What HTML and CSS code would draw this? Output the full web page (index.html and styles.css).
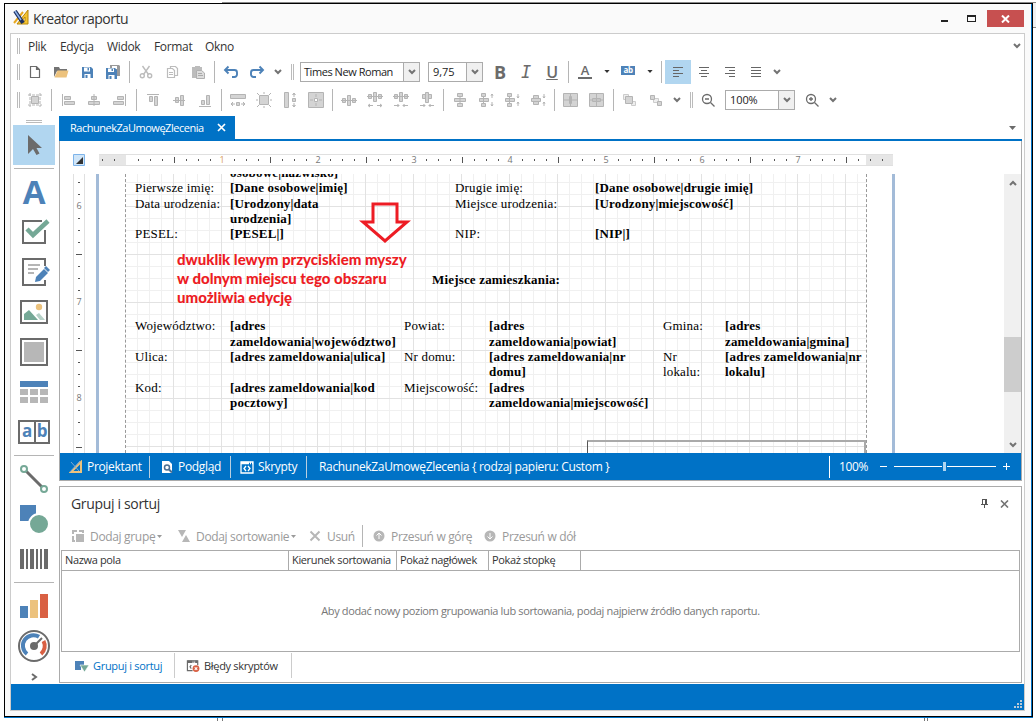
FILE: index.html
```html
<!DOCTYPE html>
<html lang="pl">
<head>
    <meta charset="UTF-8">
    <meta name="viewport" content="width=device-width, initial-scale=1.0">
    <title>Kreator raportu</title>
    <link rel="stylesheet" href="styles.css">
</head>
<body>
    <!-- shared icon shapes -->
    <svg class="defs" width="0" height="0">
        <symbol id="chev" viewBox="0 0 8 6"><path d="M1 1l3 3 3-3" fill="none" stroke="#737373" stroke-width="2"/></symbol>
        <symbol id="caret" viewBox="0 0 7 4"><path d="M0 0h7l-3.500 4z" fill="currentColor"/></symbol>
        <symbol id="save" viewBox="0 0 16 16"><path d="M3 3h9l2 2v9H3z" fill="#4d82b8"/><path d="M5 3.500h6v4H5zM5.500 10h6v4h-6z" fill="#fff"/><path d="M8.500 4h1.500v2.500H8.500zM6.500 11h2v3h-2z" fill="#4d82b8"/></symbol>
    </svg>

    <div class="window">
        <div class="titlebar">
            <svg class="logo" width="16" height="17" viewBox="0 0 16 17">
                <path d="M15 1v14H4z" fill="#f4c430" stroke="#b8860b"/><path d="M12 8v4H9z" fill="#fff" stroke="#b8860b"/>
                <path d="M1 14l9-11" stroke="#e8a820" stroke-width="2"/>
                <path d="M2 2l8 12" stroke="#1d2f60" stroke-width="4"/><path d="M2 2l6 9" stroke="#8fb3e8" stroke-width="1.500"/>
            </svg>
            <span class="caption">Kreator raportu</span>
            <span class="win-min"></span>
            <span class="win-max"></span>
            <span class="win-close"><svg width="9" height="8" viewBox="0 0 9 8"><path d="M1 .5l7 7M8 .5l-7 7" stroke="#fff" stroke-width="2"/></svg></span>
        </div>

        <div class="client">
            <div class="menubar">
                <i class="grip"></i>
                <span class="m1">Plik</span><span class="m2">Edycja</span><span class="m3">Widok</span><span class="m4">Format</span><span class="m5">Okno</span>
                <svg class="more" width="8" height="6"><use href="#chev"/></svg>
            </div>

            <div class="toolbar">
                <i class="grip"></i>
                <b class="btn"><svg viewBox="0 0 16 16"><path d="M3.500 2.500h6l3 3v8h-9zM9.500 2.500v3h3" fill="none" stroke="#6b6b6b" stroke-width="1.200"/></svg></b>
                <b class="btn"><svg viewBox="0 0 16 16"><path d="M1 3h5l1 2h7v2H4l-3 6z" fill="#737373"/><path d="M4.500 6.500H15.500L13.500 13.500H1.500z" fill="#ecc27d"/></svg></b>
                <b class="btn"><svg><use href="#save"/></svg></b>
                <b class="btn"><svg viewBox="0 0 16 16"><path d="M5 1h9l1 1v10H5z" fill="#999"/><path d="M7 2h5v3H7z" fill="#fff"/><path d="M1 4h9l2 2v9H1z" fill="#4d82b8"/><path d="M3 4.500h6v3.500H3zM3.500 11h6v4h-6z" fill="#fff"/><path d="M6.500 5H8v2H6.500zM4.500 12h2v3h-2z" fill="#4d82b8"/></svg></b>
                <i class="sep"></i>
                <b class="btn"><svg viewBox="0 0 16 16" fill="none" stroke="#bcbcbc" stroke-width="1.400"><path d="M4.500 2l6 8.500M11.500 2l-6 8.500"/><circle cx="4.300" cy="11.800" r="2"/><circle cx="11.700" cy="11.800" r="2"/></svg></b>
                <b class="btn"><svg viewBox="0 0 16 16" fill="#fff" stroke="#bcbcbc" stroke-width="1.200"><path d="M6.500 2.500h5l2 2v7h-7z"/><path d="M3.500 4.500h5l2 2v7h-7z"/><path d="M5 8.500h4M5 10.500h4"/></svg></b>
                <b class="btn"><svg viewBox="0 0 16 16"><path d="M2 3h3V2h5v1h2v11H2z" fill="#bcbcbc"/><path d="M6.500 6.500h5l3 2.500v5.500h-8z" fill="#ddd" stroke="#b0b0b0"/><path d="M8 9.500h4M8 11.500h5" stroke="#aaa"/></svg></b>
                <i class="sep"></i>
                <b class="btn"><svg viewBox="0 0 16 16"><path d="M5.500 2.500L2 6l3.500 3.500M2 6h9.500a2.500 2.500 0 0 1 2.500 2.500v2a2.500 2.500 0 0 1-2.500 2.500H9" fill="none" stroke="#4d82b8" stroke-width="1.900"/></svg></b>
                <b class="btn"><svg viewBox="0 0 16 16"><path d="M10.500 2.500L14 6l-3.500 3.500M14 6H4.500A2.500 2.500 0 0 0 2 8.500v2A2.500 2.500 0 0 0 4.500 13H7" fill="none" stroke="#4d82b8" stroke-width="1.900"/></svg></b>
                <b class="btn drop"><svg><use href="#chev"/></svg></b>
                <i class="grip second"></i>
                <span class="combo font">Times New Roman<em><svg width="8" height="6"><use href="#chev"/></svg></em></span>
                <span class="combo size">9,75<em><svg width="8" height="6"><use href="#chev"/></svg></em></span>
                <b class="btn letter">B</b>
                <b class="btn letter it">I</b>
                <b class="btn letter un">U</b>
                <i class="sep"></i>
                <b class="btn color">A</b>
                <b class="btn mini"><svg><use href="#caret"/></svg></b>
                <b class="btn"><span class="ab">ab</span></b>
                <b class="btn mini"><svg><use href="#caret"/></svg></b>
                <i class="sep"></i>
                <b class="btn on"><svg viewBox="0 0 16 16"><path d="M3 3.500h10M3 6.500h6M3 9.500h10M3 12.500h6" stroke="#666"/></svg></b>
                <b class="btn"><svg viewBox="0 0 16 16"><path d="M3 3.500h10M5 6.500h6M3 9.500h10M5 12.500h6" stroke="#666"/></svg></b>
                <b class="btn"><svg viewBox="0 0 16 16"><path d="M3 3.500h10M7 6.500h6M3 9.500h10M7 12.500h6" stroke="#666"/></svg></b>
                <b class="btn"><svg viewBox="0 0 16 16"><path d="M3 3.500h10M3 6.500h10M3 9.500h10M3 12.500h10" stroke="#666"/></svg></b>
                <b class="btn drop"><svg><use href="#chev"/></svg></b>
            </div>

            <div class="toolbar layout">
                <i class="grip"></i>
                <b class="btn"><svg viewBox="0 0 16 16"><path d="M4.500 4.500h7v7h-7z"/><path d="M3 1v14M13 1v14M1 3h14M1 13h14" fill="none" stroke-dasharray="3 1"/></svg></b>
                <i class="sep"></i>
                <b class="btn"><svg viewBox="0 0 16 16"><path d="M2.500 2v12M4.500 4.500h6v3h-6zM4.500 9.500h10v3h-10z"/></svg></b>
                <b class="btn"><svg viewBox="0 0 16 16"><path d="M8 2v12M5.500 4.500h5v3h-5zM2.500 9.500h11v3h-11z"/></svg></b>
                <b class="btn"><svg viewBox="0 0 16 16"><path d="M13.500 2v12M5.500 4.500h6v3h-6zM1.500 9.500h10v3h-10z"/></svg></b>
                <i class="sep"></i>
                <b class="btn"><svg viewBox="0 0 16 16"><path d="M2 2.500h12M4.500 4.500h3v5h-3zM9.500 4.500h3v9h-3z"/></svg></b>
                <b class="btn"><svg viewBox="0 0 16 16"><path d="M2 8.500h12M4.500 5.500h3v5h-3zM9.500 3.500h3v10h-3z"/></svg></b>
                <b class="btn"><svg viewBox="0 0 16 16"><path d="M2 14.500h12M4.500 8.500h3v4h-3zM9.500 3.500h3v9h-3z"/></svg></b>
                <i class="sep"></i>
                <b class="btn"><svg viewBox="0 0 16 16"><path d="M.5 2.500h15v4H.5zM6.500 10.500h3v3h-3zM1 12h4M11 12h4M3 10L1 12l2 2M13 10l2 2-2 2"/></svg></b>
                <b class="btn"><svg viewBox="0 0 16 16"><path d="M3.500 3.500h9v9h-9zM8 0v2M8 14v2M0 8h2M14 8h2M3 3L1 1M13 3l2-2M3 13l-2 2M13 13l2 2"/></svg></b>
                <b class="btn"><svg viewBox="0 0 16 16"><path d="M2.500.5h4v15h-4zM10.500 6.500h3v3h-3zM12 1v4M12 11v4M10.500 3L12 1l1.500 2M10.500 13l1.500 2 1.500-2"/></svg></b>
                <b class="btn"><svg viewBox="0 0 16 16"><path d="M.5.5h15v15H.5z"/><path d="M6.500 6.500h3v3h-3zM8 2v3M8 11v3M2 8h3M11 8h3" fill="#fff"/></svg></b>
                <i class="sep"></i>
                <b class="btn"><svg viewBox="0 0 16 16"><path d="M0 8.500h16M1.500 6.500h3v4h-3zM6.500 3.500h3v10h-3zM11.500 6.500h3v4h-3z"/></svg></b>
                <b class="btn"><svg viewBox="0 0 16 16"><path d="M0 4.500h16M1.500 2.500h3v4h-3zM6.500.5h3v9h-3zM11.500 2.500h3v4h-3zM1 13.500h5M10 13.500h5M3 12l-2 1.500L3 15M13 12l2 1.500-2 1.500"/></svg></b>
                <b class="btn"><svg viewBox="0 0 16 16"><path d="M0 4.500h16M1.500 2.500h3v4h-3zM6.500.5h3v9h-3zM11.500 2.500h3v4h-3zM1 13.500h5M10 13.500h5M4.500 12L6 13.500 4.500 15M11.500 12L10 13.500l1.500 1.500"/></svg></b>
                <b class="btn"><svg viewBox="0 0 16 16"><path d="M3.500 2.500h3v4h-3zM6.500.5h3v10h-3zM9.500 2.500h3v4h-3zM1 13.500h5M10 13.500h5M4.500 12L6 13.500 4.500 15M11.500 12L10 13.500l1.500 1.500"/></svg></b>
                <i class="sep"></i>
                <b class="btn"><svg viewBox="0 0 16 16"><path d="M5.500 1.500h5v3h-5zM2.500 6.500h11v3h-11zM5.500 11.500h5v3h-5zM8 4v8"/></svg></b>
                <b class="btn"><svg viewBox="0 0 16 16"><path d="M3.500 1.500h4v3h-4zM1.500 6.500h9v3h-9zM3.500 11.500h4v3h-4zM5.500 4v8M14 2v4M14 10v4M13 3.500L14 2l1 1.500M13 12.500l1 1.500 1-1.500"/></svg></b>
                <b class="btn"><svg viewBox="0 0 16 16"><path d="M3.500 1.500h4v3h-4zM1.500 6.500h9v3h-9zM3.500 11.500h4v3h-4zM5.500 4v8M14 2v4M14 10v4M13 4.500L14 6l1-1.500M13 11.500l1-1.500 1 1.500"/></svg></b>
                <b class="btn"><svg viewBox="0 0 16 16"><path d="M3.500 3.500h5v3h-5zM1.500 6.500h9v3h-9zM3.500 9.500h5v3h-5zM14 2v4M14 10v4M13 4.500L14 6l1-1.500M13 11.500l1-1.500 1 1.500"/></svg></b>
                <i class="sep"></i>
                <b class="btn"><svg viewBox="0 0 16 16"><path d="M.5 1.500h14v13H.5z"/><path d="M1 8h13M7.500 2v12M6.500 4.500h2v7h-2z"/></svg></b>
                <b class="btn"><svg viewBox="0 0 16 16"><path d="M.5 1.500h14v13H.5z"/><path d="M1 8h13M7.500 2v12M3.500 6.500h8v3h-8z"/></svg></b>
                <i class="sep"></i>
                <b class="btn"><svg viewBox="0 0 16 16"><path d="M1.500 2.500h5v5h-5zM9.500 9.500h4v4h-4z" fill="#eee" stroke="#ccc"/><path d="M3.500 4.500h7v7h-7z"/></svg></b>
                <b class="btn"><svg viewBox="0 0 16 16"><path d="M5.500 6.500h5v4h-5z" fill="#eee" stroke="#ccc"/><path d="M2.500 3.500h4v4h-4zM9.500 9.500h4v4h-4z"/></svg></b>
                <b class="btn drop"><svg><use href="#chev"/></svg></b>
                <i class="grip third"></i>
                <b class="btn zoom"><svg viewBox="0 0 16 16"><circle cx="7" cy="7" r="4.500"/><path d="M10.500 10.500l4 4M5 7h4"/></svg></b>
                <span class="combo scale">100%<em><svg width="8" height="6"><use href="#chev"/></svg></em></span>
                <b class="btn zoom in"><svg viewBox="0 0 16 16"><circle cx="7" cy="7" r="4.500"/><path d="M10.500 10.500l4 4M5 7h4M7 5v4"/></svg></b>
                <b class="btn drop"><svg><use href="#chev"/></svg></b>
            </div>

            <div class="work">
                <div class="toolbox">
                    <i class="hgrip"></i>
                    <b class="tool on"><svg viewBox="0 0 32 32"><path d="M10 6v19l5-5 3.500 6 3-1.500L18.500 19H24z" fill="#6b6b6b"/></svg></b>
                    <i class="hsep"></i>
                    <b class="tool bigA">A</b>
                    <b class="tool"><svg viewBox="0 0 32 32"><path d="M24 5H5v22h22V14" fill="none" stroke="#6b6b6b" stroke-width="2"/><path d="M9 13l6 6L30 5" fill="none" stroke="#75a896" stroke-width="4.500"/></svg></b>
                    <b class="tool"><svg viewBox="0 0 32 32"><path d="M27 10V3H5v26h22v-5" fill="none" stroke="#6b6b6b" stroke-width="2"/><path d="M10 9h12M10 13h10M10 17h6" stroke="#b5b5b5" stroke-width="2"/><path d="M17 26l1-5 8-8 4 4-8 8z" fill="#4d82b8"/><path d="M26 12l4 4 2-2-4-4z" fill="#4d82b8"/></svg></b>
                    <b class="tool"><svg viewBox="0 0 32 32"><path d="M3 5h26v22H3z" fill="none" stroke="#6b6b6b" stroke-width="2"/><circle cx="21" cy="11" r="3.200" fill="#ecc27d"/><path d="M6 24v-6l5-4 9 10z" fill="#75a896"/><path d="M18 19l3-2 6 7h-5z" fill="#b7d1c8"/></svg></b>
                    <b class="tool"><svg viewBox="0 0 32 32"><path d="M3 3h26v26H3z" fill="none" stroke="#6b6b6b" stroke-width="2"/><path d="M6 6h20v20H6z" fill="#b7b7b7"/></svg></b>
                    <b class="tool"><svg viewBox="0 0 32 32"><path d="M2 5h28v6H2z" fill="#4d82b8"/><path d="M2 13h8v6H2zM12 13h8v6h-8zM22 13h8v6h-8zM2 21h8v6H2zM12 21h8v6h-8zM22 21h8v6h-8z" fill="#b7b7b7"/></svg></b>
                    <b class="tool"><span class="comb"><u>a</u><u>b</u></span></b>
                    <i class="hsep"></i>
                    <b class="tool"><svg viewBox="0 0 32 32" fill="none"><path d="M8 8l16 16" stroke="#6b6b6b" stroke-width="3"/><circle cx="6" cy="6" r="3" stroke="#75a896" stroke-width="2"/><circle cx="26" cy="26" r="3" stroke="#75a896" stroke-width="2"/></svg></b>
                    <b class="tool"><svg viewBox="0 0 32 32"><path d="M2 2h16v16H2z" fill="#4d82b8"/><circle cx="21" cy="21" r="10" fill="#75a896" stroke="#fff" stroke-width="2"/></svg></b>
                    <b class="tool"><svg viewBox="0 0 32 32"><path d="M2 6h4v20H2zM8 6h2v20H8zM12 6h4v20h-4zM18 6h2v20h-2zM22 6h2v20h-2zM26 6h4v20h-4z" fill="#6b6b6b"/></svg></b>
                    <i class="hsep"></i>
                    <b class="tool"><svg viewBox="0 0 32 32"><path d="M2 16h8v12H2z" fill="#4d82b8"/><path d="M12 10h8v18h-8z" fill="#ecc27d"/><path d="M22 4h8v24h-8z" fill="#d96043"/></svg></b>
                    <b class="tool"><svg viewBox="0 0 32 32" fill="none"><circle cx="16" cy="16" r="15" stroke="#6b6b6b" stroke-width="2"/><path d="M9 24A10.500 10.500 0 0 1 21 6.800" stroke="#4d82b8" stroke-width="4"/><path d="M25.500 11a10.500 10.500 0 0 1-2.500 13" stroke="#d96043" stroke-width="4"/><path d="M16 16l8-8" stroke="#6b6b6b" stroke-width="2"/><circle cx="16" cy="16" r="4" fill="#6b6b6b"/></svg></b>
                    <svg class="next" width="7" height="8" viewBox="0 0 7 8"><path d="M1 1l4 3-4 3" fill="none" stroke="#6b6b6b" stroke-width="2"/></svg>
                </div>

                <div class="right">
                    <div class="tabs">
                        <span class="tab">RachunekZaUmowęZlecenia <svg width="9" height="9" viewBox="0 0 9 9"><path d="M1 1l7 7M8 1L1 8" stroke="#fff" stroke-width="1.700"/></svg></span>
                        <svg class="tabmenu" width="7" height="4"><use href="#caret"/></svg>
                    </div>

                    <div class="designer">
                        <div class="ruler-row">
                            <svg class="corner" width="12" height="12" viewBox="0 0 12 12"><path d="M.5.5h11v11H.5z" fill="#cfe5f8" stroke="#7eb4ea"/><path d="M10 3v7H3z" fill="#333"/></svg>
                            <div class="hruler">
                                <svg width="794" height="12">
                                    <defs><pattern id="ht" x="27" width="48" height="12" patternUnits="userSpaceOnUse"><path d="M12.500 4v2M24.500 4v2M36.500 4v2" stroke="#555"/></pattern></defs>
                                    <path d="M27 0h740v12H27z" fill="#fff"/>
                                    <path d="M0 0h794v12H0z" fill="url(#ht)"/>
                                    <path d="M75.500 2v6M171.500 2v6M267.500 2v6M363.500 2v6M459.500 2v6M555.500 2v6M651.500 2v6M747.500 2v6" stroke="#555"/>
                                </svg>
                                <div class="nums"><s class="hot">1</s><s>2</s><s>3</s><s>4</s><s>5</s><s>6</s><s>7</s></div>
                            </div>
                        </div>
                        <div class="surface">
                            <div class="vruler">
                                <svg width="12" height="279">
                                    <defs><pattern id="vt" y="32" width="12" height="48" patternUnits="userSpaceOnUse"><path d="M4 12.500h2M4 24.500h2M4 36.500h2" stroke="#555"/></pattern></defs>
                                    <path d="M0 0h12v279H0z" fill="url(#vt)"/>
                                    <path d="M2 80.500h6M2 176.500h6M2 273.500h6" stroke="#555"/>
                                </svg>
                                <div class="nums"><s>6</s><s>7</s><s>8</s></div>
                            </div>
                            <div class="paper">
                                <div class="band">
                                    <div class="person">
                                        <span></span><strong>osobowe|nazwisko]</strong><span></span><span></span>
                                        <span>Pierwsze imię:</span><strong>[Dane osobowe|imię]</strong><span>Drugie imię:</span><strong>[Dane osobowe|drugie imię]</strong>
                                        <span>Data urodzenia:</span><strong>[Urodzony|data<br>urodzenia]</strong><span>Miejsce urodzenia:</span><strong>[Urodzony|miejscowość]</strong>
                                        <span>PESEL:</span><strong>[PESEL|]</strong><span>NIP:</span><strong>[NIP|]</strong>
                                    </div>
                                    <h2>Miejsce zamieszkania:</h2>
                                    <div class="address">
                                        <span>Województwo:</span><strong>[adres<br>zameldowania|województwo]</strong><span>Powiat:</span><strong>[adres<br>zameldowania|powiat]</strong><span>Gmina:</span><strong>[adres<br>zameldowania|gmina]</strong>
                                        <span>Ulica:</span><strong>[adres zameldowania|ulica]</strong><span>Nr domu:</span><strong>[adres zameldowania|nr<br>domu]</strong><span>Nr<br>lokalu:</span><strong>[adres zameldowania|nr<br>lokalu]</strong>
                                        <span>Kod:</span><strong>[adres zameldowania|kod<br>pocztowy]</strong><span>Miejscowość:</span><strong>[adres<br>zameldowania|miejscowość]</strong>
                                    </div>
                                    <div class="frame"></div>
                                    <p class="note">dwuklik lewym przyciskiem myszy<br>w dolnym miejscu tego obszaru<br>umożliwia edycję</p>
                                    <svg class="arrow" width="52" height="42" viewBox="0 0 52 42"><path d="M14 2h24v18h10L26 39 4 20h10z" fill="none" stroke="#ed1c24" stroke-width="3"/></svg>
                                </div>
                            </div>
                            <div class="scroll">
                                <svg width="8" height="6"><use href="#chev"/></svg>
                                <i></i>
                                <svg width="8" height="6"><use href="#chev"/></svg>
                            </div>
                        </div>
                        <div class="viewbar">
                            <span class="v1"><svg viewBox="0 0 14 14"><path d="M12 2v10H2z" fill="none" stroke="#ecc27d" stroke-width="2"/><path d="M2 2l8 9M1 12L11 1" stroke="#7fa9d2"/></svg>Projektant</span>
                            <span class="v2"><svg viewBox="0 0 14 14"><path d="M2 1h7l3 3v9H2z" fill="#fff"/><circle cx="7" cy="7.500" r="2.500" fill="none" stroke="#4d6f91" stroke-width="1.500"/><path d="M9 9.500l3 3" stroke="#4d6f91" stroke-width="2"/></svg>Podgląd</span>
                            <span class="v3"><svg viewBox="0 0 14 14"><path d="M1 2h12v11H1z" fill="none" stroke="#fff" stroke-width="1.300"/><path d="M1 3h12" stroke="#fff" stroke-width="2.500" stroke-dasharray="8 1 1 1"/><path d="M6 6L4 8.500 6 11M8 6l2 2.500L8 11" fill="none" stroke="#fff" stroke-width="1.300"/></svg>Skrypty</span>
                            <span class="v4">RachunekZaUmowęZlecenia { rodzaj papieru: Custom }</span>
                            <span class="v5">100%</span>
                            <svg class="slider" width="130" height="11" viewBox="0 0 130 11"><path d="M0 5.500h7M14 5.500h102M123 5.500h7M126.500 2v7" stroke="#fff"/><path d="M62 1h5v9h-5z" fill="#0072c6"/><path d="M63 1h3v9h-3z" fill="#b1d6f0"/></svg>
                        </div>
                    </div>

                    <div class="panel">
                        <div class="panel-head">
                            <span>Grupuj i sortuj</span>
                            <svg width="7" height="9" viewBox="0 0 7 9"><path d="M1.500 0v5.500M0 5.500h7M3.500 6v3M1 .5h4.500" stroke="#555"/><path d="M4 0h2v5H4z" fill="#555"/></svg>
                            <svg width="9" height="8" viewBox="0 0 9 8"><path d="M1 .5l7 7M8 .5l-7 7" stroke="#737373" stroke-width="1.600"/></svg>
                        </div>
                        <div class="actions">
                            <span class="a1"><svg viewBox="0 0 12 12"><path d="M4 4h8v8H4z" fill="#b7b7b7"/><path d="M1 4V1h4M7 1h4v2M1 6v5h2" fill="none" stroke="#b7b7b7" stroke-width="2"/></svg>Dodaj grupę<svg class="car" viewBox="0 0 7 4"><use href="#caret"/></svg></span>
                            <span class="a2"><svg viewBox="0 0 12 12"><path d="M0 0h8L4 7zM4 12l4-7 4 7z" fill="#b7b7b7"/></svg>Dodaj sortowanie<svg class="car" viewBox="0 0 7 4"><use href="#caret"/></svg></span>
                            <span class="a3"><svg viewBox="0 0 12 12"><path d="M1.500 1.500l9 9M10.500 1.500l-9 9" stroke="#b7b7b7" stroke-width="2"/></svg>Usuń</span>
                            <span class="a4"><svg viewBox="0 0 12 12"><circle cx="6" cy="6" r="5.500" fill="#b7b7b7"/><path d="M6 9V3M3.500 5.500L6 3l2.500 2.500" fill="none" stroke="#fff"/></svg>Przesuń w górę</span>
                            <span class="a5"><svg viewBox="0 0 12 12"><circle cx="6" cy="6" r="5.500" fill="#b7b7b7"/><path d="M6 3v6M3.500 6.500L6 9l2.500-2.500" fill="none" stroke="#fff"/></svg>Przesuń w dół</span>
                        </div>
                        <div class="grid">
                            <div class="grid-head"><span>Nazwa pola</span><span>Kierunek sortowania</span><span>Pokaż nagłówek</span><span>Pokaż stopkę</span></div>
                            <div class="empty">Aby dodać nowy poziom grupowania lub sortowania, podaj najpierw źródło danych raportu.</div>
                        </div>
                        <div class="panel-tabs">
                            <span class="t1"><svg viewBox="0 0 14 12"><path d="M0 1h9v4H6v5H0z" fill="#4d82b8"/><path d="M5 5h9l-4.500 7z" fill="#75a896" stroke="#fff" stroke-width=".6"/></svg>Grupuj i sortuj</span>
                            <span class="t2"><svg viewBox="0 0 15 14"><path d="M7 12.500H1V1h12v5" fill="none" stroke="#6b6b6b" stroke-width="1.400"/><path d="M1 2h12" stroke="#6b6b6b" stroke-width="3" stroke-dasharray="6 1 1 1"/><path d="M5.500 6L4 8l1.500 2" fill="none" stroke="#6b6b6b" stroke-width="1.300"/><circle cx="11" cy="10" r="4" fill="#d96043"/><path d="M9.500 8.500l3 3M12.500 8.500l-3 3" stroke="#fff" stroke-width="1.200"/></svg>Błędy skryptów</span>
                        </div>
                    </div>
                </div>
            </div>

            <div class="statusbar"><svg width="8" height="8" viewBox="0 0 8 8"><path d="M6 0h2v2H6zM3 3h2v2H3zM6 3h2v2H6zM0 6h2v2H0zM3 6h2v2H3zM6 6h2v2H6z" fill="#b9c9d6"/></svg></div>
        </div>
    </div>
</body>
</html>
```
FILE: styles.css
```css
* {
    box-sizing: border-box;
}
body {
    margin: 0;
    width: 1036px;
    height: 721px;
    overflow: hidden;
    padding: 3px 0 0 4px;
    /* edges of the sheet that shows behind the window */
    background:
        linear-gradient(#888, #888) 222px 2px / 814px 1px no-repeat,
        linear-gradient(#888, #888) 1033px 27px / 3px 1px no-repeat,
        linear-gradient(#f0f0f0, #f0f0f0) 1033px 3px / 3px 24px no-repeat,
        linear-gradient(90deg, #777 1px, transparent 1px 5px, #777 5px 6px, transparent 6px) 217px 718px / 7px 3px no-repeat,
        linear-gradient(90deg, #777 1px, transparent 1px 3px, #777 3px 4px, transparent 4px) 924px 718px / 5px 3px no-repeat,
        #fff;
    font-family: "Open Sans", "Noto Sans", sans-serif;
    font-size: 12px;
    letter-spacing: -0.33px;
    color: #333;
    white-space: nowrap;
}
svg {
    display: block;
    flex: none;
}
.defs {
    position: absolute;
}
b, i, s, u, em {
    font-weight: normal;
    font-style: normal;
    text-decoration: none;
}

/* window frame */
.window {
    width: 1029px;
    height: 714px;
    border: 1px solid #000;
    background: #fafafa;
    box-shadow: inset -1px 0 #0072c6, 0 1px #0072c6;
    padding: 0 7px 0 5px;
}
.titlebar {
    height: 29px;
    display: flex;
    align-items: center;
    padding-left: 3px;
}
.logo {
    margin-top: -2px;
}
.caption {
    font-size: 14px;
    letter-spacing: -0.5px;
    margin-left: 4px;
    flex: 1;
}
.win-min {
    width: 7px;
    height: 2px;
    background: #222;
    margin: 4px 19px 0 -1px;
}
.win-max {
    width: 9px;
    height: 7px;
    border: 1px solid #222;
    border-top-width: 2px;
    margin-right: 11px;
}
.win-close {
    width: 37px;
    height: 17px;
    background: #c75050;
    display: flex;
    align-items: center;
    justify-content: center;
    margin-right: 1px;
}
.client {
    width: 1015px;
    height: 678px;
    border: 1px solid #ccc;
    background: #fff;
}

/* menu and toolbars */
.menubar {
    height: 24px;
    display: flex;
    align-items: center;
    padding: 0 3px 0 6px;
}
.grip {
    width: 3px;
    height: 16px;
    border: solid #bbb;
    border-width: 0 1px;
    flex: none;
}
.m1 {
    margin-left: 8px;
    width: 32px;
}
.m2, .m3 {
    width: 47px;
}
.m4 {
    width: 51px;
}
.m5 {
    flex: 1;
}
.toolbar {
    height: 27px;
    display: flex;
    align-items: center;
    padding-left: 6px;
}
.grip + .btn {
    margin-left: 2px;
}
.btn {
    width: 26px;
    height: 24px;
    display: flex;
    align-items: center;
    justify-content: center;
    flex: none;
}
.btn svg {
    width: 16px;
    height: 16px;
}
.drop {
    width: 16px;
}
.btn.drop svg {
    width: 8px;
    height: 6px;
}
.sep {
    width: 1px;
    height: 22px;
    margin: 0 3px;
    background: #b5b5b5;
    flex: none;
}
.second {
    margin: 0 6px 0 5px;
}
.combo {
    height: 20px;
    border: 1px solid #ababab;
    display: flex;
    justify-content: space-between;
    align-items: center;
    padding-left: 4px;
    font-size: 11px;
    letter-spacing: -0.1px;
    color: #222;
    flex: none;
}
.combo em {
    width: 16px;
    height: 18px;
    border-left: 1px solid #ababab;
    background: #f0f0f0;
    display: flex;
    align-items: center;
    justify-content: center;
}
.font {
    width: 120px;
    margin-right: 8px;
    padding-left: 3px;
    letter-spacing: -0.45px;
}
.size {
    width: 55px;
    margin-right: 4px;
}
.letter {
    font-size: 18px;
    font-weight: bold;
    color: #6b6b6b;
}
.it {
    font-style: italic;
    font-weight: normal;
    font-family: "DejaVu Sans Mono", monospace;
    font-size: 17px;
}
.un {
    font-weight: 600;
    font-size: 16px;
    text-decoration: underline;
}
.color {
    font-size: 13px;
    font-weight: 600;
    color: #6b6b6b;
    background: linear-gradient(#6b6b6b, #6b6b6b) 6px 17px / 14px 2px no-repeat;
    padding-bottom: 4px;
}
.mini {
    width: 17px;
    color: #333;
}
.btn.mini svg {
    width: 6px;
    height: 3px;
}
.ab {
    width: 14px;
    height: 9px;
    line-height: 8px;
    background: #4d82b8;
    color: #fff;
    font-size: 8px;
    font-weight: bold;
    text-align: center;
    margin-top: -3px;
}
.on {
    background: #b1d6f0;
}
.layout {
    height: 29px;
}
.layout .btn svg {
    fill: #d4d4d4;
    stroke: #b4b4b4;
}
.third {
    margin: 0 2px 0 5px;
}
.toolbar .zoom {
    margin: 0 4px 0 0;
}
.toolbar .in {
    margin: 0 0 0 4px;
}
.layout .zoom svg {
    fill: none;
    stroke: #6b6b6b;
    stroke-width: 1.3;
}
.scale {
    width: 70px;
}

/* toolbox on the left */
.work {
    height: 569px;
    margin-top: 1px;
    display: flex;
}
.toolbox {
    width: 48px;
    padding: 5px 0 0 2px;
}
.hgrip {
    display: block;
    width: 16px;
    height: 3px;
    margin: 0 0 2px 13px;
    border: solid #bbb;
    border-width: 1px 0;
}
.tool {
    width: 42px;
    height: 40px;
    display: flex;
    align-items: center;
    justify-content: center;
}
.tool svg {
    width: 32px;
    height: 32px;
}
.hsep {
    display: block;
    width: 40px;
    height: 1px;
    margin: 3px 1px;
    background: #b5b5b5;
}
.bigA {
    font-size: 33px;
    font-weight: bold;
    color: #4d82b8;
    padding-bottom: 2px;
}
.comb {
    display: flex;
    width: 32px;
    height: 24px;
    border: 2px solid #6b6b6b;
}
.comb u {
    width: 14px;
    line-height: 18px;
    text-align: center;
    font-size: 17px;
    font-weight: bold;
    color: #4d82b8;
}
.comb u + u {
    border-left: 2px solid #6b6b6b;
}
.next {
    margin: 7px 0 0 18px;
}

/* document tab */
.right {
    width: 963px;
}
.tabs {
    height: 25px;
    margin-top: 1px;
    border-bottom: 2px solid #0072c6;
    display: flex;
    justify-content: space-between;
    align-items: center;
    padding-right: 6px;
}
.tab {
    width: 176px;
    height: 23px;
    background: #0072c6;
    color: #fff;
    font-size: 11px;
    letter-spacing: -0.48px;
    display: flex;
    align-items: center;
    justify-content: space-between;
    padding: 0 9px 0 11px;
}
.tabmenu {
    color: #6b6b6b;
}

/* designer surface */
.designer {
    height: 340px;
    border: solid #ababab;
    border-width: 0 1px 1px;
}
.ruler-row {
    height: 33px;
    padding: 13px 0 0 13px;
    display: flex;
}
.corner {
    margin-right: 14px;
}
.hruler {
    width: 794px;
    height: 12px;
    background: #e6e6e6;
    border: solid #e0e0e0;
    border-width: 1px 0;
}
.hruler svg {
    height: 10px;
}
.nums s {
    text-align: center;
    font-size: 9px;
    color: #777;
}
.nums .hot {
    color: #d99a5c;
}
.hruler .nums {
    display: flex;
    margin: -10px 0 0 75px;
    line-height: 10px;
}
.hruler s {
    width: 96px;
}
.surface {
    height: 279px;
    display: flex;
    justify-content: space-between;
    padding-left: 13px;
}
.vruler {
    width: 12px;
    border: solid #e0e0e0;
    border-width: 0 1px;
    overflow: hidden;
}
.vruler svg {
    width: 10px;
}
.vruler .nums {
    margin-top: -295px;
}
.vruler s {
    display: block;
    height: 96px;
    line-height: 96px;
}
.paper {
    width: 799px;
    margin-left: 11px;
    margin-right: auto;
    border: solid #a3bbd8;
    border-width: 0 3px;
    padding-left: 26px;
}
.band {
    position: relative;
    width: 742px;
    height: 279px;
    overflow: hidden;
    border: dashed #999;
    border-width: 0 1px;
    background:
        repeating-linear-gradient(90deg, transparent 0 47px, #e2e2e2 47px 48px),
        repeating-linear-gradient(transparent 0 47px, #e2e2e2 47px 48px) 0 33px / 100% 480px,
        repeating-linear-gradient(90deg, transparent 0 11px, #f0f0f0 11px 12px),
        repeating-linear-gradient(transparent 0 11px, #f0f0f0 11px 12px) 0 33px / 100% 480px;
    font-family: "Liberation Serif", serif;
    font-size: 13px;
    line-height: 15.3px;
    letter-spacing: 0.17px;
    color: #000;
}
.person {
    display: grid;
    grid-template-columns: 95px 225px 140px auto;
    margin: -9px 0 0 9px;
}
.band h2 {
    margin: 31px 0 0 306px;
    font-size: 13px;
    line-height: 15px;
}
.address {
    display: grid;
    grid-template-columns: 95px 174px 85px 174px 62px auto;
    margin: 31px 0 0 9px;
}
.frame {
    width: 279px;
    height: 30px;
    margin: 30px 0 0 461px;
    border: solid #aaa;
    border-width: 2px 2px 0 1px;
    border-left-color: #555;
}
.note {
    position: absolute;
    left: 51px;
    top: 76px;
    margin: 0;
    font: 900 15px/19px Lato, sans-serif;
    letter-spacing: 0;
    color: #ed1c24;
}
.arrow {
    position: absolute;
    left: 233px;
    top: 28px;
}
.scroll {
    width: 17px;
    background: #f0f0f0;
    display: flex;
    flex-direction: column;
    align-items: center;
    padding: 6px 0 5px;
}
.scroll svg:first-child {
    transform: rotate(180deg);
}
.scroll i {
    width: 17px;
    height: 55px;
    margin: 151px 0 auto;
    background: #cdcdcd;
}
.viewbar {
    height: 27px;
    background: #0072c6;
    color: #fff;
    display: flex;
    align-items: center;
}
.viewbar span {
    height: 22px;
    display: flex;
    align-items: center;
    border-right: 1px solid #b9cfe0;
}
.viewbar span svg {
    width: 14px;
    height: 14px;
    margin-right: 4px;
}
.v1 {
    width: 90px;
    padding-left: 9px;
}
.v2 {
    width: 81px;
    padding-left: 10px;
}
.v3 {
    width: 76px;
    padding-left: 9px;
}
.viewbar .v4 {
    width: 523px;
    padding-left: 12px;
    border-right-color: #fff;
}
.viewbar .v5 {
    width: 50px;
    padding-left: 9px;
    border: 0;
}

/* group and sort panel */
.panel {
    height: 197px;
    margin-top: 5px;
    border: 1px solid #ababab;
    padding: 0 1px;
}
.panel-head {
    height: 35px;
    display: flex;
    align-items: center;
    gap: 12px;
    padding: 0 11px 2px 10px;
    font-size: 14px;
}
.panel-head span {
    flex: 1;
}
.actions {
    height: 28px;
    display: flex;
    align-items: center;
    color: #9a9a9a;
}
.actions span {
    height: 22px;
    display: flex;
    align-items: center;
}
.actions svg {
    width: 12px;
    height: 12px;
    margin-right: 6px;
}
.actions .car {
    width: 5px;
    height: 3px;
    margin: 0 0 0 2px;
}
.a1 {
    width: 117px;
    padding-left: 11px;
}
.a2 {
    width: 131px;
}
.a3 {
    width: 54px;
    border-right: 1px solid #b5b5b5;
}
.a4 {
    width: 121px;
    padding-left: 10px;
}
.grid {
    height: 102px;
    border: 1px solid #ababab;
    font-size: 11px;
    letter-spacing: -0.36px;
}
.grid-head {
    height: 20px;
    display: grid;
    grid-template-columns: 227px 108px 92px 92px;
    border-bottom: 1px solid #ababab;
    line-height: 18px;
}
.grid-head span {
    border-right: 1px solid #ababab;
    padding-left: 3px;
}
.empty {
    height: 80px;
    line-height: 80px;
    text-align: center;
    color: #777;
}
.panel-tabs {
    display: flex;
    padding-top: 1px;
    font-size: 11px;
    letter-spacing: -0.3px;
}
.panel-tabs span {
    height: 25px;
    display: flex;
    align-items: center;
    border-right: 1px solid #ccc;
}
.panel-tabs svg {
    width: 14px;
    height: 12px;
    margin-right: 4px;
}
.t1 {
    width: 114px;
    padding-left: 14px;
    color: #0072c6;
}
.t2 {
    width: 117px;
    padding-left: 11px;
}
.statusbar {
    height: 26px;
    background: #0072c6;
    display: flex;
    justify-content: flex-end;
    align-items: flex-end;
    padding: 0 2px 2px;
}
```
